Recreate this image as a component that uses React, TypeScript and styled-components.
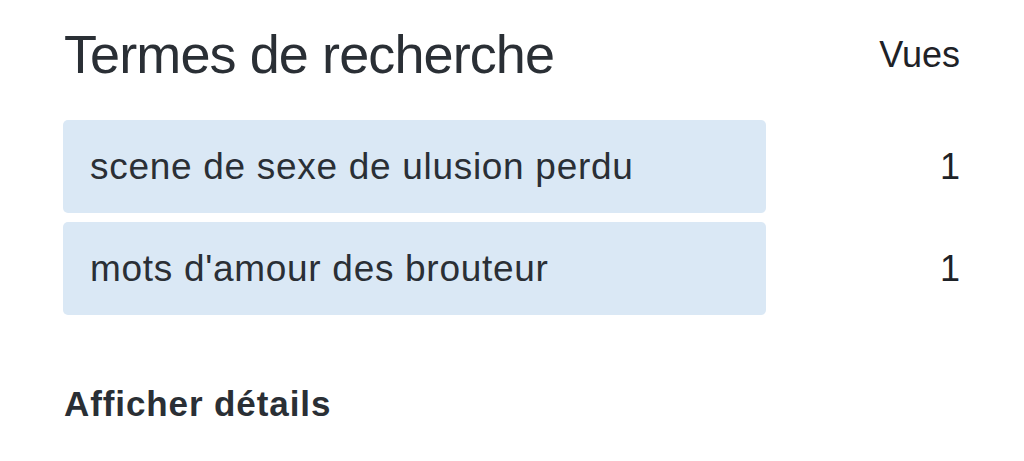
import React from 'react'
import styled, { createGlobalStyle } from 'styled-components'

const GlobalStyle = createGlobalStyle`
  html, body {
    margin: 0;
    padding: 0;
    background: #ffffff;
  }
  body {
    font-family: 'Liberation Sans', Arial, sans-serif;
    color: #2a2f35;
  }
`

const Page = styled.div`
  width: 1024px;
  height: 461px;
  padding: 23px 64px 0 63px;
  box-sizing: border-box;
  overflow: hidden;
`

const Header = styled.div`
  display: flex;
  justify-content: space-between;
  align-items: flex-start;
  height: 97px;
`

const Title = styled.h1`
  margin: 0 0 0 1px;
  font-size: 54px;
  font-weight: 400;
  line-height: 62px;
  letter-spacing: -0.9px;
`

const ColumnLabel = styled.span`
  font-size: 36px;
  line-height: 62px;
  margin-top: 1px;
  color: #1e2227;
`

const List = styled.div`
  display: flex;
  flex-direction: column;
  gap: 9px;
`

const TermRow = styled.div`
  display: flex;
  align-items: center;
  justify-content: space-between;
`

const Term = styled.div`
  width: 703px;
  height: 93px;
  box-sizing: border-box;
  display: flex;
  align-items: center;
  padding: 0 27px;
  background: #dae8f5;
  border-radius: 5px;
  font-size: 37px;
  letter-spacing: 0.7px;
`

const Count = styled.span`
  font-size: 36px;
  color: #1e2227;
`

const DetailsLink = styled.a`
  display: block;
  margin: 69px 0 0 1px;
  font-size: 35px;
  font-weight: 700;
  letter-spacing: 0.9px;
  color: #2a2f35;
  text-decoration: none;
`

const terms = [
  { text: 'scene de sexe de ulusion perdu', views: 1 },
  { text: "mots d'amour des brouteur", views: 1 },
]

export default function App() {
  return (
    <>
      <GlobalStyle />
      <Page>
        <Header>
          <Title>Termes de recherche</Title>
          <ColumnLabel>Vues</ColumnLabel>
        </Header>
        <List>
          {terms.map((term, index) => (
            <TermRow key={index}>
              <Term>{term.text}</Term>
              <Count>{term.views}</Count>
            </TermRow>
          ))}
        </List>
        <DetailsLink>Afficher détails</DetailsLink>
      </Page>
    </>
  )
}
